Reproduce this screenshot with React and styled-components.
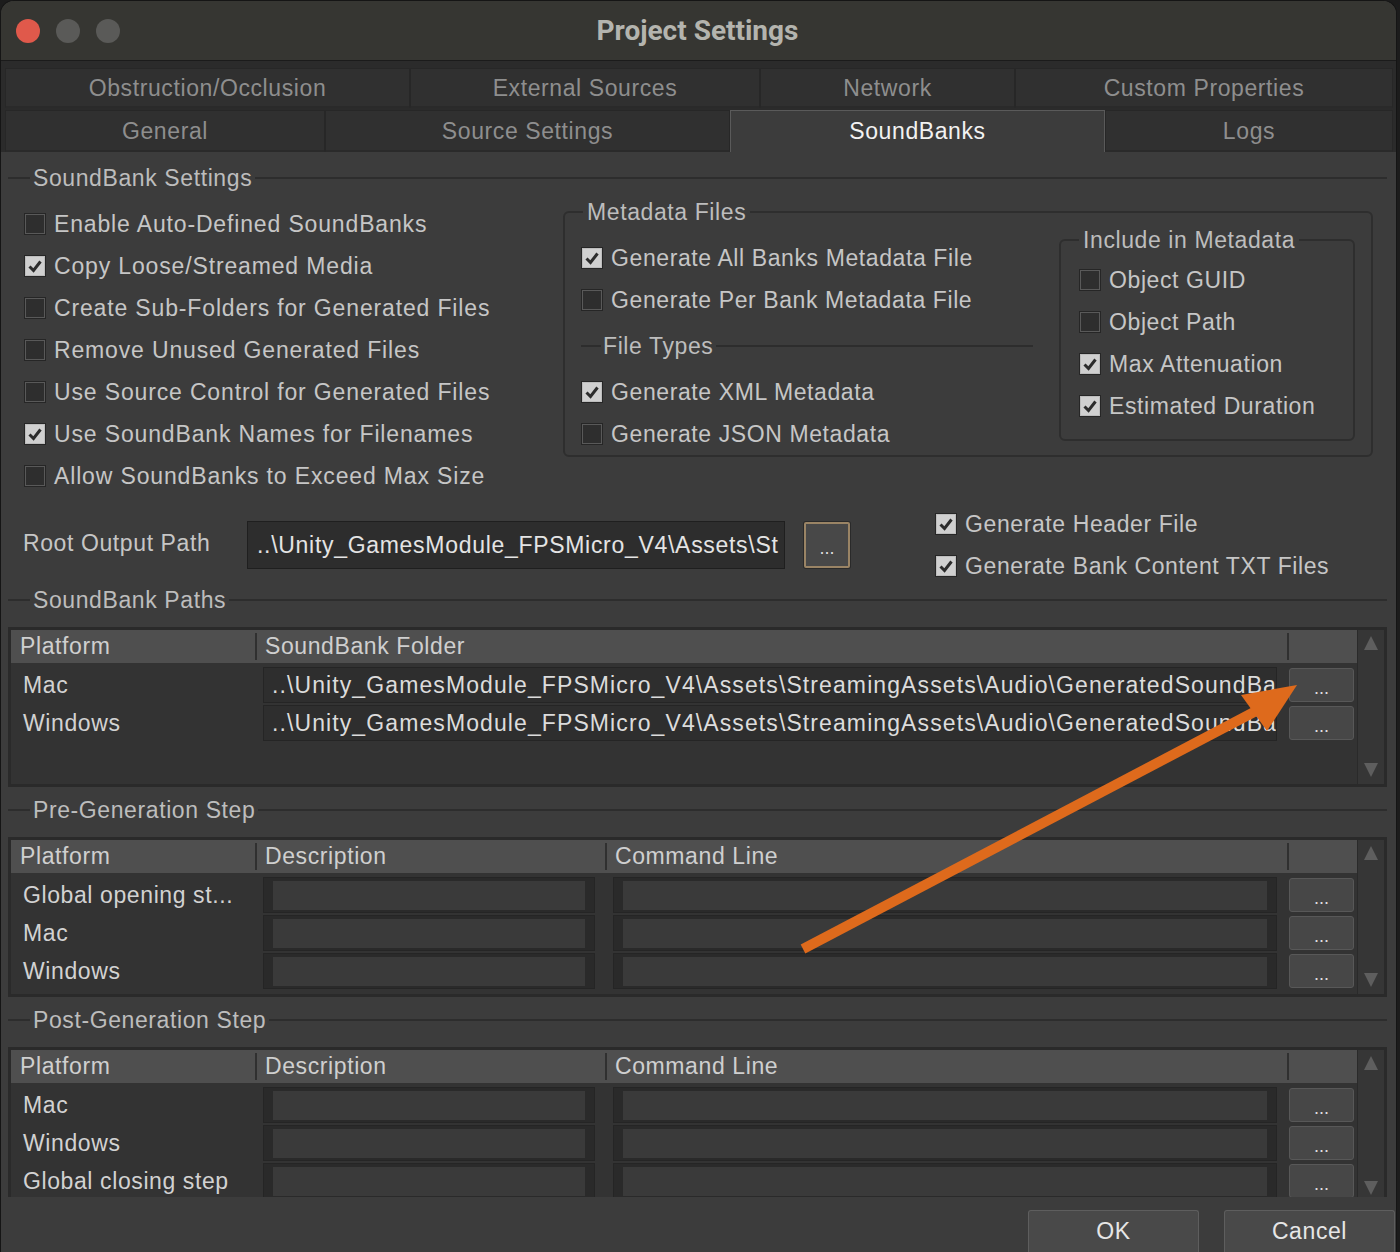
import React from 'react'
import styled, { createGlobalStyle } from 'styled-components'

const GlobalStyle = createGlobalStyle`
  html, body { margin: 0; padding: 0; background: #1c1c1c; }
  * { box-sizing: border-box; }
`

const Window = styled.div`
  position: relative;
  width: 1397px;
  height: 1252px;
  overflow: hidden;
  background: #3c3c3c;
  border: 1px solid #151515;
  border-bottom: none;
  border-radius: 14px 14px 0 0;
  font-family: 'Liberation Sans', Arial, sans-serif;
  font-size: 23px;
  letter-spacing: 0.6px;
  color: #c6c6c6;
`

const TitleBar = styled.div`
  height: 60px;
  display: grid;
  grid-template-columns: 1fr auto 1fr;
  align-items: center;
  background: #363632;
  border-bottom: 1px solid #1b1b1b;
`

const Lights = styled.div`
  display: flex;
  gap: 16px;
  padding-left: 15px;
`

const Light = styled.span`
  width: 24px;
  height: 24px;
  border-radius: 50%;
  background: ${p => p.color};
`

const Title = styled.div`
  font-family: Roboto, 'Liberation Sans', sans-serif;
  font-weight: 700;
  font-size: 28px;
  letter-spacing: 0;
  color: #b4b4ae;
  padding-right: 2px;
`

const TabStrip = styled.div`
  background: #2b2b2b;
  padding: 7px 3px 0 4px;
  display: flex;
  flex-direction: column;
  gap: 2px;
`

const TabRow = styled.div`
  display: grid;
  grid-template-columns: ${p => p.cols};
  height: ${p => p.h}px;
`

const Tab = styled.div`
  display: flex;
  align-items: center;
  justify-content: center;
  background: ${p => (p.active ? '#3c3c3c' : '#303030')};
  color: ${p => (p.active ? '#f2f2f2' : '#8e8e8e')};
  border: 1px solid ${p => (p.active ? '#5a5a5a' : '#272727')};
  border-bottom: ${p => (p.active ? 'none' : '2px solid #2a2a2a')};
  padding-top: ${p => (p.active ? '0' : '2px')};
`

const Body = styled.div`
  padding: 0 9px 0 7px;
`

const SectionHeader = styled.div`
  display: flex;
  align-items: center;
  height: 26px;
  margin-top: ${p => p.mt || 0}px;
  color: #bdbdbd;
  &::before {
    content: '';
    width: 22px;
    height: 2px;
    margin-right: 3px;
    background: #2d2d2d;
  }
  &::after {
    content: '';
    flex: 1;
    height: 2px;
    margin-left: 3px;
    background: #2d2d2d;
  }
`

const SubHeader = styled(SectionHeader)`
  height: 42px;
  margin: 4px 0;
  &::before { width: 20px; margin-right: 2px; }
`

const SettingsGrid = styled.div`
  display: grid;
  grid-template-columns: 555px 810px;
  align-items: start;
`

const CheckList = styled.div`
  display: flex;
  flex-direction: column;
  padding-top: ${p => p.pt || 0}px;
  padding-left: ${p => p.pl || 0}px;
  letter-spacing: ${p => p.ls || 0.6}px;
`

const CheckRow = styled.label`
  display: flex;
  align-items: center;
  gap: 8px;
  height: 42px;
  white-space: nowrap;
`

const Box = styled.span`
  width: 22px;
  height: 22px;
  flex: none;
  display: flex;
  align-items: center;
  justify-content: center;
  border: 1px solid #262626;
  background: ${p => (p.checked ? '#d0d0d0' : '#2e2e2e')};
  box-shadow: inset 0 0 0 1px ${p => (p.checked ? '#bdbdbd' : '#595959')};
`

const GroupBox = styled.fieldset`
  margin: ${p => p.mt || 0}px 0 0 ${p => p.ml || 0}px;
  padding: 0 ${p => p.px}px 0 ${p => p.px}px;
  width: ${p => p.w}px;
  height: ${p => p.h}px;
  border: 2px solid #2e2e2e;
  border-radius: 6px;
  min-width: 0;
`

const Legend = styled.legend`
  padding: 0 4px;
  margin-left: ${p => p.ml || 0}px;
  line-height: 26px;
  color: #bdbdbd;
`

const MetaInner = styled.div`
  display: flex;
  align-items: flex-start;
`

const MetaLeft = styled.div`
  width: 452px;
  padding-top: 12px;
  display: flex;
  flex-direction: column;
`

const RootRow = styled.div`
  display: flex;
  align-items: center;
  height: 84px;
  margin-top: 6px;
`

const RootLabel = styled.div`
  width: 239px;
  padding-left: 15px;
  padding-bottom: 4px;
`

const PathInput = styled.div`
  width: 538px;
  height: 48px;
  line-height: 46px;
  padding-left: 9px;
  background: #2d2d2d;
  border: 1px solid #1f1f1f;
  color: #e4e4e4;
  white-space: nowrap;
  overflow: hidden;
  letter-spacing: 0.7px;
`

const BrowseButton = styled.button`
  margin-left: 19px;
  width: 46px;
  height: 46px;
  padding: 6px 0 0;
  background: #484848;
  border: 2px solid #9a8465;
  border-radius: 2px;
  box-shadow: 0 0 0 1px #2a2a2a;
  color: #dedede;
  font-family: 'Liberation Sans', Arial, sans-serif;
  font-size: 18px;
`

const SideChecks = styled(CheckList)`
  margin-left: 85px;
`

const Table = styled.div`
  margin-top: 14px;
  height: ${p => p.h}px;
  display: flex;
  overflow: hidden;
  background: #333333;
  border: 3px solid #2a2a2a;
  border-bottom: ${p => (p.clipped ? 'none' : '3px solid #2a2a2a')};
`

const TableMain = styled.div`
  flex: 1;
  display: flex;
  flex-direction: column;
`

const HeaderRow = styled.div`
  display: grid;
  grid-template-columns: ${p => p.cols};
  height: 33px;
  flex: none;
  background: #4f4f4f;
  color: #cfcfcf;
`

const HeaderCell = styled.div`
  margin: 3px 0;
  line-height: 27px;
  padding-left: ${p => (p.first ? 9 : 8)}px;
  border-left: ${p => (p.first ? 'none' : '2px solid #303030')};
  white-space: nowrap;
`

const Rows = styled.div`
  padding-top: 3px;
`

const DataRow = styled.div`
  display: grid;
  grid-template-columns: ${p => p.cols};
  height: 38px;
  align-items: center;
`

const PlatformCell = styled.div`
  padding-left: 12px;
  color: #d2d2d2;
  white-space: nowrap;
`

const FieldCell = styled.div`
  padding: 0 10px 0 8px;
`

const PathField = styled.div`
  height: 36px;
  line-height: 34px;
  padding-left: 8px;
  background: #2e2e2e;
  border: 1px solid #252525;
  color: #dcdcdc;
  white-space: nowrap;
  overflow: hidden;
  letter-spacing: 1.1px;
`

const StepField = styled.div`
  height: 36px;
  padding: 3px 9px 2px;
  background: #2a2a2a;
  border: 1px solid #252525;
  &::after {
    content: '';
    display: block;
    height: 100%;
    background: #3a3a3a;
  }
`

const ButtonCell = styled.div`
  padding: 0 3px 0 2px;
`

const DotsButton = styled.button`
  width: 100%;
  height: 34px;
  padding: 6px 0 0;
  background: #474747;
  border: 1px solid #585858;
  border-radius: 3px;
  color: #e0e0e0;
  font-family: 'Liberation Sans', Arial, sans-serif;
  font-size: 18px;
`

const ScrollBar = styled.div`
  width: 27px;
  flex: none;
  display: flex;
  flex-direction: column;
  justify-content: space-between;
  align-items: center;
  padding: 6px 0 ${p => (p.clipped ? 2 : 7)}px;
  background: #363636;
  border-left: 1px solid #2a2a2a;
`

const Arrow = styled.span`
  width: 0;
  height: 0;
  border-left: 7px solid transparent;
  border-right: 7px solid transparent;
  ${p => (p.down ? 'border-top' : 'border-bottom')}: 14px solid #5e5e5e;
`

const Footer = styled.div`
  display: flex;
  justify-content: flex-end;
  gap: 25px;
  margin-top: 13px;
  margin-right: -8px;
`

const FooterButton = styled.button`
  width: 171px;
  height: 50px;
  padding: 0 0 8px;
  background: #494949;
  border: 1px solid #5e5e5e;
  border-bottom: none;
  border-radius: 3px 3px 0 0;
  color: #e6e6e6;
  font-family: 'Liberation Sans', Arial, sans-serif;
  font-size: 23px;
  letter-spacing: 0.6px;
`

const Overlay = styled.svg`
  position: absolute;
  left: -1px;
  top: -1px;
  pointer-events: none;
`

const Check = () => (
  <svg width="16" height="16" viewBox="0 0 16 16">
    <path d="M2.5 8.5 L6.5 12.5 L13.5 3.5" fill="none" stroke="#2c2c2c" strokeWidth="3" />
  </svg>
)

const CheckItem = ({ checked, children }) => (
  <CheckRow>
    <Box checked={checked}>{checked && <Check />}</Box>
    {children}
  </CheckRow>
)

const PATHS_COLS = '244px 1032px 70px'
const STEP_COLS = '244px 350px 682px 70px'
const FOLDER = '..\\Unity_GamesModule_FPSMicro_V4\\Assets\\StreamingAssets\\Audio\\GeneratedSoundBanks\\'

const StepTable = ({ rows, h, clipped }) => (
  <Table h={h} clipped={clipped}>
    <TableMain>
      <HeaderRow cols={STEP_COLS}>
        <HeaderCell first>Platform</HeaderCell>
        <HeaderCell>Description</HeaderCell>
        <HeaderCell>Command Line</HeaderCell>
        <HeaderCell />
      </HeaderRow>
      <Rows>
        {rows.map(r => (
          <DataRow key={r} cols={STEP_COLS}>
            <PlatformCell>{r}</PlatformCell>
            <FieldCell><StepField /></FieldCell>
            <FieldCell><StepField /></FieldCell>
            <ButtonCell><DotsButton>...</DotsButton></ButtonCell>
          </DataRow>
        ))}
      </Rows>
    </TableMain>
    <ScrollBar clipped={clipped}>
      <Arrow />
      <Arrow down />
    </ScrollBar>
  </Table>
)

export default function App() {
  return (
    <>
      <GlobalStyle />
      <Window>
        <TitleBar>
          <Lights>
            <Light color="#e0594b" />
            <Light color="#5a5a58" />
            <Light color="#5a5a58" />
          </Lights>
          <Title>Project Settings</Title>
          <div />
        </TitleBar>

        <TabStrip>
          <TabRow cols="405px 350px 255px 1fr" h={40}>
            <Tab>Obstruction/Occlusion</Tab>
            <Tab>External Sources</Tab>
            <Tab>Network</Tab>
            <Tab>Custom Properties</Tab>
          </TabRow>
          <TabRow cols="320px 405px 375px 1fr" h={42}>
            <Tab>General</Tab>
            <Tab>Source Settings</Tab>
            <Tab active>SoundBanks</Tab>
            <Tab>Logs</Tab>
          </TabRow>
        </TabStrip>

        <Body>
          <SectionHeader mt={13}>SoundBank Settings</SectionHeader>
          <SettingsGrid>
            <CheckList pt={12} pl={16} ls={0.85}>
              <CheckItem>Enable Auto-Defined SoundBanks</CheckItem>
              <CheckItem checked>Copy Loose/Streamed Media</CheckItem>
              <CheckItem>Create Sub-Folders for Generated Files</CheckItem>
              <CheckItem>Remove Unused Generated Files</CheckItem>
              <CheckItem>Use Source Control for Generated Files</CheckItem>
              <CheckItem checked>Use SoundBank Names for Filenames</CheckItem>
              <CheckItem>Allow SoundBanks to Exceed Max Size</CheckItem>
            </CheckList>

            <GroupBox mt={8} px={16} w={810} h={258}>
              <Legend ml={2}>Metadata Files</Legend>
              <MetaInner>
                <MetaLeft>
                  <CheckItem checked>Generate All Banks Metadata File</CheckItem>
                  <CheckItem>Generate Per Bank Metadata File</CheckItem>
                  <SubHeader>File Types</SubHeader>
                  <CheckItem checked>Generate XML Metadata</CheckItem>
                  <CheckItem>Generate JSON Metadata</CheckItem>
                </MetaLeft>
                <GroupBox mt={2} ml={26} px={18} w={296} h={214}>
                  <Legend>Include in Metadata</Legend>
                  <CheckList pt={6}>
                    <CheckItem>Object GUID</CheckItem>
                    <CheckItem>Object Path</CheckItem>
                    <CheckItem checked>Max Attenuation</CheckItem>
                    <CheckItem checked>Estimated Duration</CheckItem>
                  </CheckList>
                </GroupBox>
              </MetaInner>
            </GroupBox>
          </SettingsGrid>

          <RootRow>
            <RootLabel>Root Output Path</RootLabel>
            <PathInput>..\Unity_GamesModule_FPSMicro_V4\Assets\St</PathInput>
            <BrowseButton>...</BrowseButton>
            <SideChecks>
              <CheckItem checked>Generate Header File</CheckItem>
              <CheckItem checked>Generate Bank Content TXT Files</CheckItem>
            </SideChecks>
          </RootRow>

          <SectionHeader>SoundBank Paths</SectionHeader>
          <Table h={160}>
            <TableMain>
              <HeaderRow cols={PATHS_COLS}>
                <HeaderCell first>Platform</HeaderCell>
                <HeaderCell>SoundBank Folder</HeaderCell>
                <HeaderCell />
              </HeaderRow>
              <Rows>
                {['Mac', 'Windows'].map(p => (
                  <DataRow key={p} cols={PATHS_COLS}>
                    <PlatformCell>{p}</PlatformCell>
                    <FieldCell><PathField>{FOLDER + p}</PathField></FieldCell>
                    <ButtonCell><DotsButton>...</DotsButton></ButtonCell>
                  </DataRow>
                ))}
              </Rows>
            </TableMain>
            <ScrollBar>
              <Arrow />
              <Arrow down />
            </ScrollBar>
          </Table>

          <SectionHeader mt={10}>Pre-Generation Step</SectionHeader>
          <StepTable h={160} rows={['Global opening st...', 'Mac', 'Windows']} />

          <SectionHeader mt={10}>Post-Generation Step</SectionHeader>
          <StepTable h={150} clipped rows={['Mac', 'Windows', 'Global closing step']} />

          <Footer>
            <FooterButton>OK</FooterButton>
            <FooterButton>Cancel</FooterButton>
          </Footer>
        </Body>

        <Overlay width="1400" height="1252" viewBox="0 0 1400 1252">
          <line x1="803" y1="949" x2="1256" y2="711" stroke="#de6a1c" strokeWidth="10" />
          <polygon points="1297,685 1241,695 1267,731" fill="#de6a1c" />
        </Overlay>
      </Window>
    </>
  )
}
